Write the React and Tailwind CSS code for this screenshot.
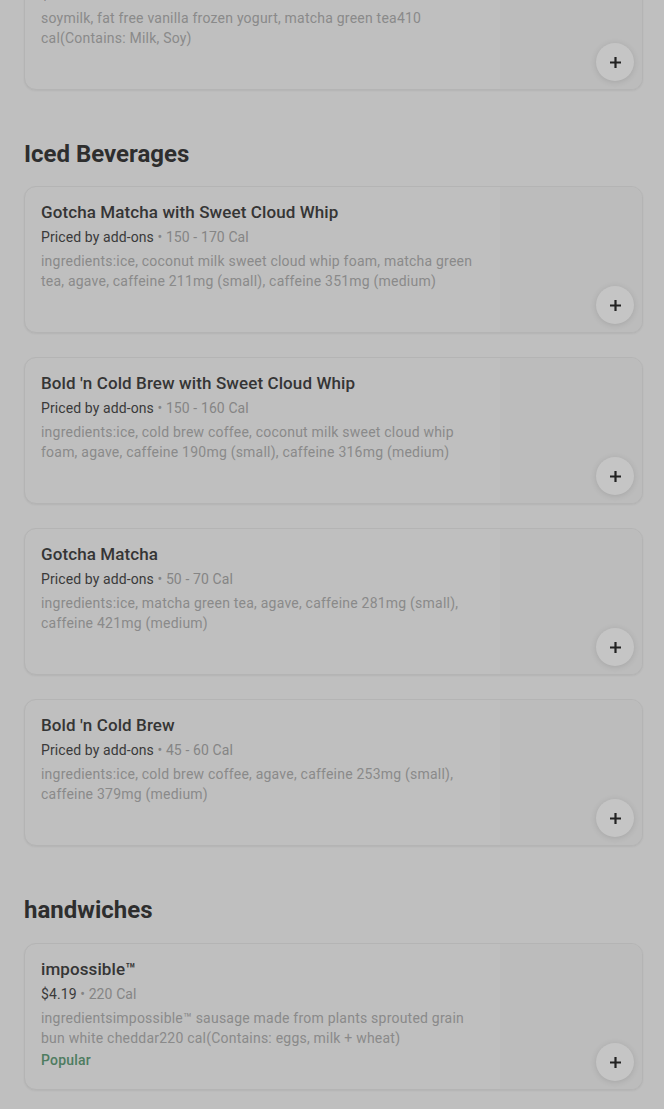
import React from "react";

const sections = [
  {
    title: "Iced Beverages",
    first: true,
    items: [
      {
        name: "Gotcha Matcha with Sweet Cloud Whip",
        price: "Priced by add-ons",
        cal: "150 - 170 Cal",
        desc: "ingredients:ice, coconut milk sweet cloud whip foam, matcha green tea, agave, caffeine 211mg (small), caffeine 351mg (medium)",
      },
      {
        name: "Bold 'n Cold Brew with Sweet Cloud Whip",
        price: "Priced by add-ons",
        cal: "150 - 160 Cal",
        desc: "ingredients:ice, cold brew coffee, coconut milk sweet cloud whip foam, agave, caffeine 190mg (small), caffeine 316mg (medium)",
      },
      {
        name: "Gotcha Matcha",
        price: "Priced by add-ons",
        cal: "50 - 70 Cal",
        desc: "ingredients:ice, matcha green tea, agave, caffeine 281mg (small), caffeine 421mg (medium)",
      },
      {
        name: "Bold 'n Cold Brew",
        price: "Priced by add-ons",
        cal: "45 - 60 Cal",
        desc: "ingredients:ice, cold brew coffee, agave, caffeine 253mg (small), caffeine 379mg (medium)",
      },
    ],
  },
  {
    title: "handwiches",
    items: [
      {
        name: "impossible™",
        price: "$4.19",
        cal: "220 Cal",
        desc: "ingredientsimpossible™ sausage made from plants sprouted grain bun white cheddar220 cal(Contains: eggs, milk + wheat)",
        popular: true,
      },
    ],
  },
];

function PlusButton() {
  return (
    <button className="absolute bottom-[8px] right-[8px] w-[38px] h-[38px] rounded-full bg-[#c5c5c5] shadow-[0_1px_6px_rgba(0,0,0,0.12)] flex items-center justify-center">
      <svg width="13" height="13" viewBox="0 0 13 13">
        <path d="M6.5 1v11M1 6.5h11" stroke="#222" strokeWidth="2.2" />
      </svg>
    </button>
  );
}

function Card({ item }) {
  return (
    <div className="relative flex h-[147px] rounded-[12px] border border-[#b4b4b4] bg-[#bfbfbf] shadow-[0_1px_2px_rgba(0,0,0,0.06)] overflow-hidden">
      <div className="flex-1 min-w-0 pl-4 pr-4 pt-[15px]">
        <div className="text-[17px] leading-[20px] font-medium tracking-[0.1px] text-[#353535]">{item.name}</div>
        <div className="mt-[5px] text-[14px] leading-[20px] tracking-[0.1px]">
          <span className="text-[#3a3a3a]">{item.price}</span>
          <span className="text-[#858585]"> • {item.cal}</span>
        </div>
        <div className="mt-[4px] text-[14px] leading-[20px] tracking-[0.22px] text-[#8a8a8a] pr-[6px]">{item.desc}</div>
        {item.popular && (
          <div className="mt-[2px] text-[14px] leading-[20px] font-medium tracking-[0.2px] text-[#4e7c60]">Popular</div>
        )}
      </div>
      <div className="w-[142px] shrink-0 bg-[#bcbcbc]" />
      <PlusButton />
    </div>
  );
}

export default function App() {
  return (
    <div className="min-h-[1109px] bg-[#bfbfbf] pl-6 pr-[21px] pb-10 overflow-hidden" style={{ fontFamily: "Roboto, 'Noto Sans', sans-serif" }}>
      <div className="-mt-[57px]">
        <Card
          item={{
            name: "Matcha Shake",
            price: "$5.49",
            cal: "410 Cal",
            desc: "soymilk, fat free vanilla frozen yogurt, matcha green tea410 cal(Contains: Milk, Soy)",
          }}
        />
      </div>
      {sections.map((s) => (
        <div key={s.title} className={s.first ? "mt-[48px]" : "mt-[48px]"}>
          <h2 className="text-[24px] leading-[32px] font-bold text-[#2e2e2e]">{s.title}</h2>
          <div className={s.first ? "mt-[16px] flex flex-col gap-[24px]" : "mt-[17px] flex flex-col gap-[24px]"}>
            {s.items.map((it) => (
              <Card key={it.name} item={it} />
            ))}
          </div>
        </div>
      ))}
    </div>
  );
}
